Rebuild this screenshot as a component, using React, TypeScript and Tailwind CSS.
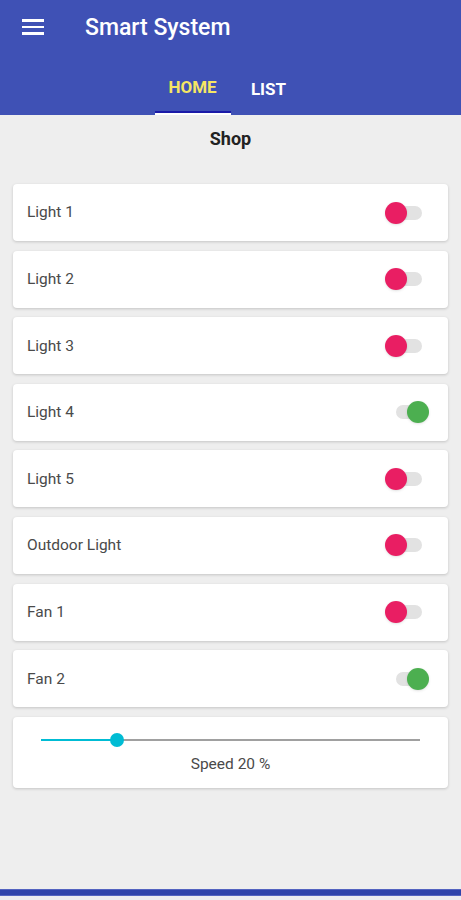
import React, { useState } from 'react';

type Device = { name: string; on: boolean };

const initialDevices: Device[] = [
  { name: 'Light 1', on: false },
  { name: 'Light 2', on: false },
  { name: 'Light 3', on: false },
  { name: 'Light 4', on: true },
  { name: 'Light 5', on: false },
  { name: 'Outdoor Light', on: false },
  { name: 'Fan 1', on: false },
  { name: 'Fan 2', on: true },
];

const Toggle: React.FC<{ on: boolean; onClick: () => void }> = ({ on, onClick }) => (
  <button onClick={onClick} className="relative w-[37px] h-[24px] flex items-center">
    <span className="absolute left-[11px] right-0 h-[14px] rounded-full bg-[#e2e2e2]" />
    <span
      className={`absolute w-[22px] h-[22px] rounded-full shadow-sm ${
        on ? 'right-[-7px] bg-[#4caf50]' : 'left-0 bg-[#e91e63]'
      }`}
    />
  </button>
);

export default function App() {
  const [devices, setDevices] = useState(initialDevices);
  const speed = 20;

  const toggle = (i: number) =>
    setDevices((d) => d.map((x, j) => (j === i ? { ...x, on: !x.on } : x)));

  return (
    <div className="w-[461px] h-[900px] bg-[#eeeeee] flex flex-col font-['Roboto',sans-serif]">
      {/* Header */}
      <div className="bg-[#3f51b5] h-[115px] shrink-0 flex flex-col">
        <div className="h-[56px] flex items-center">
          <div className="ml-[22px] w-[22px] flex flex-col gap-[4px] -mt-[2px]">
            <span className="h-[2.5px] bg-white" />
            <span className="h-[2.5px] bg-white" />
            <span className="h-[2.5px] bg-white" />
          </div>
          <span className="ml-[41px] text-white text-[23px] font-medium">Smart System</span>
        </div>
        <div className="flex-1 flex justify-center">
          <div className="w-[76px] flex flex-col items-center">
            <span className="flex-1 flex items-center pt-[9px] text-[17px] font-bold text-[#f5e663]">HOME</span>
            <span className="w-full h-[2px] bg-[#1a1aa8]" />
            <span className="w-full h-[2px] bg-white" />
          </div>
          <div className="w-[76px] flex flex-col items-center">
            <span className="flex-1 flex items-center pt-[9px] text-[17px] font-bold text-white">LIST</span>
          </div>
        </div>
      </div>

      {/* Content */}
      <div className="px-[13px] flex flex-col">
        <h2 className="mt-[12px] text-center text-[18px] leading-[24px] font-bold text-[#222]">Shop</h2>

        <div className="mt-[33px] flex flex-col gap-[9.6px]">
          {devices.map((d, i) => (
            <div
              key={d.name}
              className="h-[57px] bg-white rounded-[4px] shadow-[0_1px_3px_rgba(0,0,0,0.18)] flex items-center justify-between pl-[14px] pr-[26px]"
            >
              <span className="text-[15.5px] text-[#4a4a4a] pt-[1px]">{d.name}</span>
              <Toggle on={d.on} onClick={() => toggle(i)} />
            </div>
          ))}

          <div className="h-[71px] bg-white rounded-[4px] shadow-[0_1px_3px_rgba(0,0,0,0.18)] flex flex-col px-[28px]">
            <div className="relative mt-[22px] h-[2px] bg-[#a0a0a0]">
              <div className="absolute left-0 top-0 h-[2px] bg-[#00bcd4]" style={{ width: `${speed}%` }} />
              <div
                className="absolute top-[-6px] w-[14px] h-[14px] rounded-full bg-[#00bcd4] -translate-x-1/2"
                style={{ left: `${speed}%` }}
              />
            </div>
            <span className="mt-[12px] text-center text-[15.5px] text-[#4a4a4a]">Speed {speed} %</span>
          </div>
        </div>
      </div>

      <div className="flex-1" />
      <div className="h-[7px] bg-[#2f43ab] border-y border-[#5363c0]" />
      <div className="h-[4px] bg-[#ececf0]" />
    </div>
  );
}
